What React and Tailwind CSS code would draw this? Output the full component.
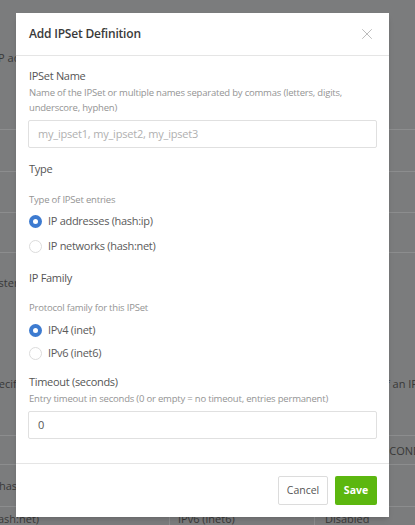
import React from 'react';
import { X } from 'lucide-react';

const Radio = ({ checked, label }) => (
  <label className="flex items-center h-[20px] gap-[6px] text-[11px] tracking-[-0.3px] text-[#5a5a5a]">
    {checked ? (
      <span className="w-[13px] h-[13px] rounded-full bg-[#3d7bd0] flex items-center justify-center">
        <span className="w-[5px] h-[5px] rounded-full bg-white" />
      </span>
    ) : (
      <span className="w-[13px] h-[13px] rounded-full border border-[#dcdcdc] bg-white" />
    )}
    <span>{label}</span>
  </label>
);

const Label = ({ children, className = '' }) => (
  <div className={`pl-[1px] text-[11px] leading-[16px] tracking-[-0.3px] text-[#555] ${className}`}>{children}</div>
);

const Hint = ({ children, className = '' }) => (
  <p className={`pl-[1px] text-[9.5px] leading-[15px] tracking-[-0.2px] text-[#949494] ${className}`}>{children}</p>
);

const Background = () => (
  <div className="text-[11px] text-[#383838] leading-none">
    <div className="h-[130px] border-b border-[#8c8d8e] pt-[52px]">
      <span className="ml-[-5px]">IP addresses</span>
    </div>
    <div className="h-[42px] border-b border-[#8c8d8e]" />
    <div className="h-[41px] border-b border-[#8c8d8e]" />
    <div className="h-[40px] border-b border-[#8c8d8e]" />
    <div className="h-[183px] border-b border-[#8c8d8e] pt-[24px] flex flex-col">
      <span className="ml-[-13px]">System</span>
      <div className="flex justify-between mt-[90px]">
        <span className="ml-[-14px]">Specify</span>
        <span className="mr-[-3px]">If an IP</span>
      </div>
    </div>
    <div className="h-[29px] border-b border-[#8c8d8e] flex justify-end items-center">
      <span className="mr-[-12px]">SECONDS</span>
    </div>
    <div className="h-[42px] border-b border-[#8c8d8e] flex items-center">
      <span className="ml-[-1px]">hash:ip</span>
    </div>
    <div className="h-[18px] flex">
      <div className="w-[170px] border-r border-[#8c8d8e] pt-[6px]">
        <span className="ml-[-12px]">(hash:net)</span>
      </div>
      <div className="w-[145px] border-r border-[#8c8d8e] pt-[6px] pl-[8px]">IPv6 (inet6)</div>
      <div className="flex-1 pt-[6px] pl-[10px]">Disabled</div>
    </div>
  </div>
);

export default function App() {
  return (
    <div className="relative w-[415px] h-[525px] overflow-hidden bg-[#7b7c7d]" style={{ fontFamily: '"Open Sans", sans-serif' }}>
      <Background />
      <div className="absolute left-[16px] top-[13px] w-[373px] h-[504px] bg-white flex flex-col shadow-md">
        <div className="h-[43px] flex items-center justify-between pl-[13px] pr-[13px] border-b border-[#e5e5e5]">
          <h3 className="text-[12px] font-semibold tracking-[-0.2px] text-[#3a3a3a]">Add IPSet Definition</h3>
          <X size={18} strokeWidth={1.2} className="text-[#b5b5b5]" />
        </div>
        <div className="flex-1 px-[12px] pt-[12px]">
          <Label>IPSet Name</Label>
          <Hint className="mt-[1px]">
            Name of the IPSet or multiple names separated by commas (letters, digits, underscore, hyphen)
          </Hint>
          <div className="mt-[5px] h-[28px] border border-[#e0e0e0] rounded-[2px] flex items-center px-[9px] text-[11px] tracking-[-0.2px] text-[#b0b0b0]">
            my_ipset1, my_ipset2, my_ipset3
          </div>

          <Label className="mt-[13px]">Type</Label>
          <Hint className="mt-[15px]">Type of IPSet entries</Hint>
          <div className="mt-[4px] pl-[1px] flex flex-col gap-[5px]">
            <Radio checked label="IP addresses (hash:ip)" />
            <Radio label="IP networks (hash:net)" />
          </div>

          <Label className="mt-[14px]">IP Family</Label>
          <Hint className="mt-[14px]">Protocol family for this IPSet</Hint>
          <div className="mt-[5px] pl-[1px] flex flex-col gap-[3px]">
            <Radio checked label="IPv4 (inet)" />
            <Radio label="IPv6 (inet6)" />
          </div>

          <Label className="mt-[11px]">Timeout (seconds)</Label>
          <Hint className="mt-[1px]">
            Entry timeout in seconds (0 or empty = no timeout, entries permanent)
          </Hint>
          <div className="mt-[5px] h-[28px] border border-[#e0e0e0] rounded-[2px] flex items-center px-[9px] text-[11px] text-[#555]">
            0
          </div>
        </div>
        <div className="h-[54px] border-t border-[#e5e5e5] flex items-center justify-end gap-[7px] pr-[12px]">
          <button className="h-[29px] w-[50px] border border-[#dcdcdc] rounded-[2px] bg-white text-[10.5px] text-[#555]">Cancel</button>
          <button className="h-[29px] w-[42px] rounded-[2px] bg-[#5cb70f] text-[10.5px] font-bold text-white">Save</button>
        </div>
      </div>
    </div>
  );
}
